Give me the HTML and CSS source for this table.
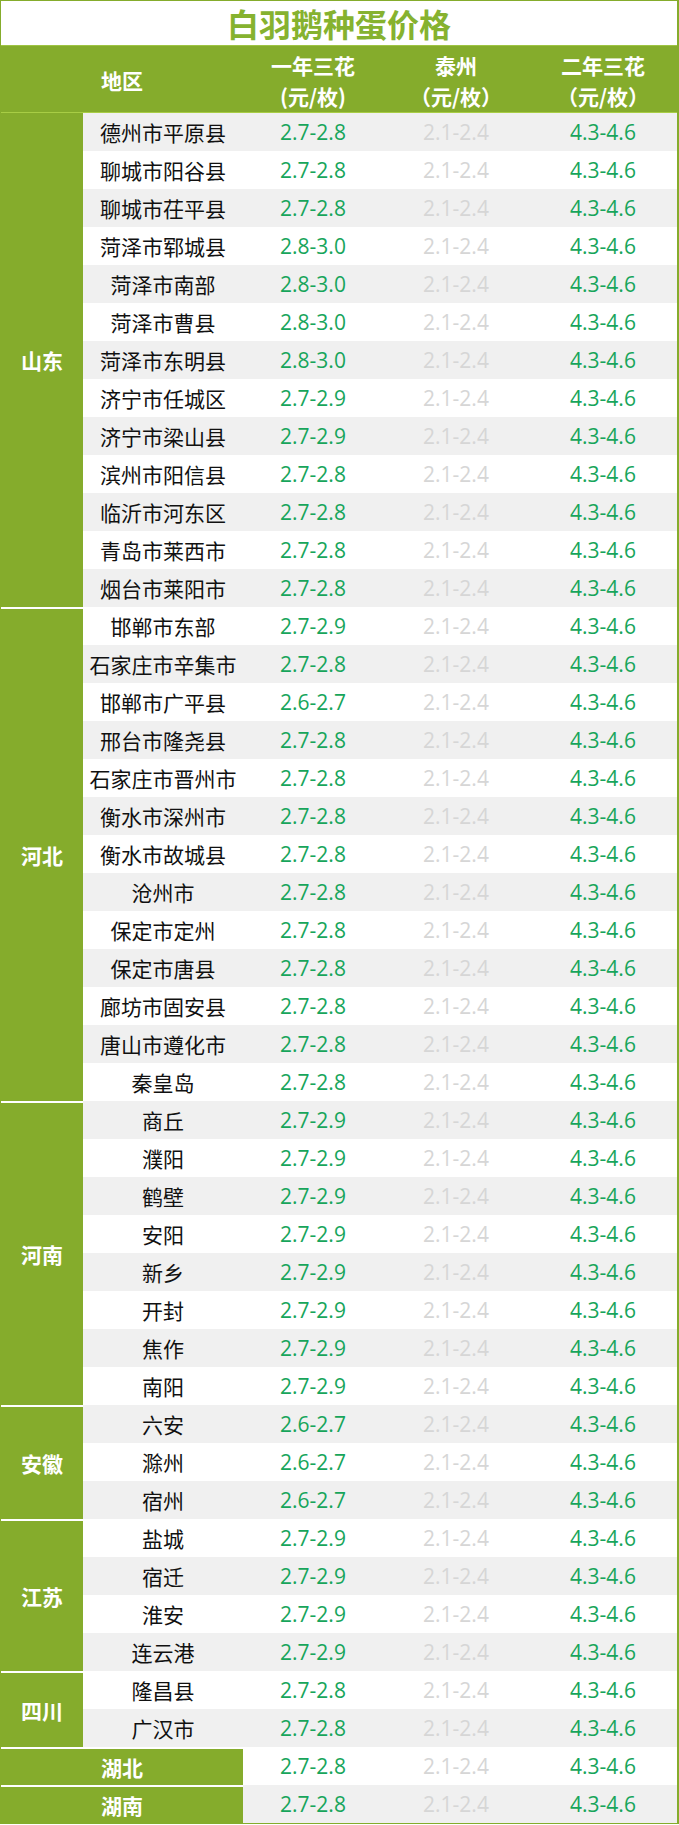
FILE: index.html
```html
<!DOCTYPE html>
<html lang="zh">
<head>
<meta charset="utf-8">
<title>白羽鹅种蛋价格</title>
<link rel="stylesheet" href="styles.css">
</head>
<body>
<div class="sheet">
  <div class="title">白羽鹅种蛋价格</div>
  <div class="head">
    <div class="h-area">地区</div>
    <div class="h-col">一年三花<br>(元/枚)</div>
    <div class="h-col">泰州<br>（元/枚）</div>
    <div class="h-col">二年三花<br>（元/枚）</div>
  </div>

  <div class="group first">
    <div class="prov">山东</div>
    <div class="rows">
      <div class="row alt"><span class="area">德州市平原县</span><span class="v">2.7-2.8</span><span class="m">2.1-2.4</span><span class="v">4.3-4.6</span></div>
      <div class="row"><span class="area">聊城市阳谷县</span><span class="v">2.7-2.8</span><span class="m">2.1-2.4</span><span class="v">4.3-4.6</span></div>
      <div class="row alt"><span class="area">聊城市茌平县</span><span class="v">2.7-2.8</span><span class="m">2.1-2.4</span><span class="v">4.3-4.6</span></div>
      <div class="row"><span class="area">菏泽市郓城县</span><span class="v">2.8-3.0</span><span class="m">2.1-2.4</span><span class="v">4.3-4.6</span></div>
      <div class="row alt"><span class="area">菏泽市南部</span><span class="v">2.8-3.0</span><span class="m">2.1-2.4</span><span class="v">4.3-4.6</span></div>
      <div class="row"><span class="area">菏泽市曹县</span><span class="v">2.8-3.0</span><span class="m">2.1-2.4</span><span class="v">4.3-4.6</span></div>
      <div class="row alt"><span class="area">菏泽市东明县</span><span class="v">2.8-3.0</span><span class="m">2.1-2.4</span><span class="v">4.3-4.6</span></div>
      <div class="row"><span class="area">济宁市任城区</span><span class="v">2.7-2.9</span><span class="m">2.1-2.4</span><span class="v">4.3-4.6</span></div>
      <div class="row alt"><span class="area">济宁市梁山县</span><span class="v">2.7-2.9</span><span class="m">2.1-2.4</span><span class="v">4.3-4.6</span></div>
      <div class="row"><span class="area">滨州市阳信县</span><span class="v">2.7-2.8</span><span class="m">2.1-2.4</span><span class="v">4.3-4.6</span></div>
      <div class="row alt"><span class="area">临沂市河东区</span><span class="v">2.7-2.8</span><span class="m">2.1-2.4</span><span class="v">4.3-4.6</span></div>
      <div class="row"><span class="area">青岛市莱西市</span><span class="v">2.7-2.8</span><span class="m">2.1-2.4</span><span class="v">4.3-4.6</span></div>
      <div class="row alt"><span class="area">烟台市莱阳市</span><span class="v">2.7-2.8</span><span class="m">2.1-2.4</span><span class="v">4.3-4.6</span></div>
    </div>
  </div>

  <div class="group">
    <div class="prov">河北</div>
    <div class="rows">
      <div class="row"><span class="area">邯郸市东部</span><span class="v">2.7-2.9</span><span class="m">2.1-2.4</span><span class="v">4.3-4.6</span></div>
      <div class="row alt"><span class="area">石家庄市辛集市</span><span class="v">2.7-2.8</span><span class="m">2.1-2.4</span><span class="v">4.3-4.6</span></div>
      <div class="row"><span class="area">邯郸市广平县</span><span class="v">2.6-2.7</span><span class="m">2.1-2.4</span><span class="v">4.3-4.6</span></div>
      <div class="row alt"><span class="area">邢台市隆尧县</span><span class="v">2.7-2.8</span><span class="m">2.1-2.4</span><span class="v">4.3-4.6</span></div>
      <div class="row"><span class="area">石家庄市晋州市</span><span class="v">2.7-2.8</span><span class="m">2.1-2.4</span><span class="v">4.3-4.6</span></div>
      <div class="row alt"><span class="area">衡水市深州市</span><span class="v">2.7-2.8</span><span class="m">2.1-2.4</span><span class="v">4.3-4.6</span></div>
      <div class="row"><span class="area">衡水市故城县</span><span class="v">2.7-2.8</span><span class="m">2.1-2.4</span><span class="v">4.3-4.6</span></div>
      <div class="row alt"><span class="area">沧州市</span><span class="v">2.7-2.8</span><span class="m">2.1-2.4</span><span class="v">4.3-4.6</span></div>
      <div class="row"><span class="area">保定市定州</span><span class="v">2.7-2.8</span><span class="m">2.1-2.4</span><span class="v">4.3-4.6</span></div>
      <div class="row alt"><span class="area">保定市唐县</span><span class="v">2.7-2.8</span><span class="m">2.1-2.4</span><span class="v">4.3-4.6</span></div>
      <div class="row"><span class="area">廊坊市固安县</span><span class="v">2.7-2.8</span><span class="m">2.1-2.4</span><span class="v">4.3-4.6</span></div>
      <div class="row alt"><span class="area">唐山市遵化市</span><span class="v">2.7-2.8</span><span class="m">2.1-2.4</span><span class="v">4.3-4.6</span></div>
      <div class="row"><span class="area">秦皇岛</span><span class="v">2.7-2.8</span><span class="m">2.1-2.4</span><span class="v">4.3-4.6</span></div>
    </div>
  </div>

  <div class="group">
    <div class="prov">河南</div>
    <div class="rows">
      <div class="row alt"><span class="area">商丘</span><span class="v">2.7-2.9</span><span class="m">2.1-2.4</span><span class="v">4.3-4.6</span></div>
      <div class="row"><span class="area">濮阳</span><span class="v">2.7-2.9</span><span class="m">2.1-2.4</span><span class="v">4.3-4.6</span></div>
      <div class="row alt"><span class="area">鹤壁</span><span class="v">2.7-2.9</span><span class="m">2.1-2.4</span><span class="v">4.3-4.6</span></div>
      <div class="row"><span class="area">安阳</span><span class="v">2.7-2.9</span><span class="m">2.1-2.4</span><span class="v">4.3-4.6</span></div>
      <div class="row alt"><span class="area">新乡</span><span class="v">2.7-2.9</span><span class="m">2.1-2.4</span><span class="v">4.3-4.6</span></div>
      <div class="row"><span class="area">开封</span><span class="v">2.7-2.9</span><span class="m">2.1-2.4</span><span class="v">4.3-4.6</span></div>
      <div class="row alt"><span class="area">焦作</span><span class="v">2.7-2.9</span><span class="m">2.1-2.4</span><span class="v">4.3-4.6</span></div>
      <div class="row"><span class="area">南阳</span><span class="v">2.7-2.9</span><span class="m">2.1-2.4</span><span class="v">4.3-4.6</span></div>
    </div>
  </div>

  <div class="group">
    <div class="prov">安徽</div>
    <div class="rows">
      <div class="row alt"><span class="area">六安</span><span class="v">2.6-2.7</span><span class="m">2.1-2.4</span><span class="v">4.3-4.6</span></div>
      <div class="row"><span class="area">滁州</span><span class="v">2.6-2.7</span><span class="m">2.1-2.4</span><span class="v">4.3-4.6</span></div>
      <div class="row alt"><span class="area">宿州</span><span class="v">2.6-2.7</span><span class="m">2.1-2.4</span><span class="v">4.3-4.6</span></div>
    </div>
  </div>

  <div class="group">
    <div class="prov">江苏</div>
    <div class="rows">
      <div class="row"><span class="area">盐城</span><span class="v">2.7-2.9</span><span class="m">2.1-2.4</span><span class="v">4.3-4.6</span></div>
      <div class="row alt"><span class="area">宿迁</span><span class="v">2.7-2.9</span><span class="m">2.1-2.4</span><span class="v">4.3-4.6</span></div>
      <div class="row"><span class="area">淮安</span><span class="v">2.7-2.9</span><span class="m">2.1-2.4</span><span class="v">4.3-4.6</span></div>
      <div class="row alt"><span class="area">连云港</span><span class="v">2.7-2.9</span><span class="m">2.1-2.4</span><span class="v">4.3-4.6</span></div>
    </div>
  </div>

  <div class="group">
    <div class="prov">四川</div>
    <div class="rows">
      <div class="row"><span class="area">隆昌县</span><span class="v">2.7-2.8</span><span class="m">2.1-2.4</span><span class="v">4.3-4.6</span></div>
      <div class="row alt"><span class="area">广汉市</span><span class="v">2.7-2.8</span><span class="m">2.1-2.4</span><span class="v">4.3-4.6</span></div>
    </div>
  </div>

  <div class="row single"><span class="prov-wide">湖北</span><span class="v">2.7-2.8</span><span class="m">2.1-2.4</span><span class="v">4.3-4.6</span></div>
  <div class="row single alt"><span class="prov-wide">湖南</span><span class="v">2.7-2.8</span><span class="m">2.1-2.4</span><span class="v">4.3-4.6</span></div>
</div>
</body>
</html>
```

FILE: styles.css
```css
html, body {
  margin: 0;
  padding: 0;
  background: #ffffff;
}

.sheet {
  width: 679px;
  box-sizing: border-box;
  border-style: solid;
  border-color: #85ac2c;
  border-width: 1px 2px 1px 1px;
  font-family: "Noto Sans CJK SC", "Noto Sans", sans-serif;
  font-size: 21px;
  color: #111111;
}

.title {
  height: 44px;
  line-height: 44px;
  text-align: center;
  background: #ffffff;
  color: #86b22f;
  font-size: 32px;
  font-weight: 700;
}

.head {
  display: grid;
  grid-template-columns: 242px 140px 146px 148px;
  height: 68px;
  box-sizing: border-box;
  background: #85ac2c;
  border-top: 1px solid #9fc444;
  border-bottom: 1px solid #a8cd45;
  color: #ffffff;
  font-weight: 700;
  font-size: 21px;
}

.h-area {
  display: flex;
  align-items: center;
  justify-content: center;
  padding-top: 2px;
}

.h-col {
  display: flex;
  align-items: center;
  justify-content: center;
  text-align: center;
  line-height: 31px;
  padding-top: 3px;
  text-spacing-trim: space-all;
}

.group {
  display: flex;
}

.prov {
  width: 82px;
  flex: none;
  box-sizing: border-box;
  background: #85ac2c;
  color: #ffffff;
  font-weight: 700;
  display: flex;
  align-items: center;
  justify-content: center;
  border-top: 2px solid #ffffff;
}

.group.first .prov {
  border-top: none;
}

.rows {
  flex: 1;
  display: flex;
  flex-direction: column;
}

.row {
  display: grid;
  grid-template-columns: 160px 140px 146px 148px;
  height: 38px;
  align-items: center;
  text-align: center;
  background: #ffffff;
}

.row.alt {
  background: #f0f0f0;
}

.row.single {
  grid-template-columns: 242px 140px 146px 148px;
}

.prov-wide {
  height: 38px;
  box-sizing: border-box;
  background: #85ac2c;
  color: #ffffff;
  font-weight: 700;
  display: flex;
  align-items: center;
  justify-content: center;
  border-top: 2px solid #ffffff;
}

.area {
  color: #111111;
  white-space: nowrap;
}

.v {
  font-family: "Open Sans", "Noto Sans", sans-serif;
  color: #17a55b;
  font-size: 21px;
}

.m {
  font-family: "Open Sans", "Noto Sans", sans-serif;
  color: #d6d6d6;
  font-size: 21px;
}
```
